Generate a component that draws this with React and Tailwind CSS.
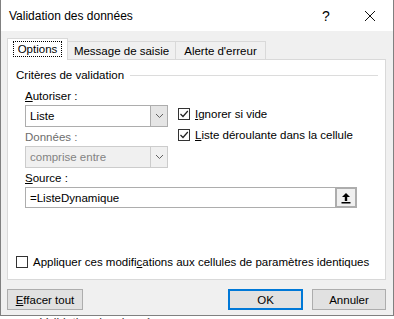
import React from 'react';

const Chevron = () => (
  <svg width="9" height="6" viewBox="0 0 9 6" className="block">
    <path d="M1 1 L4.5 4.5 L8 1" fill="none" stroke="#606060" strokeWidth="1" />
  </svg>
);

const Check = ({ checked }) => (
  <span className="w-[12px] h-[12px] border border-[#333] bg-white flex items-center justify-center shrink-0">
    {checked && (
      <svg width="10" height="10" viewBox="0 0 10 10" className="block">
        <path d="M1.5 5 L4 7.5 L8.8 2" fill="none" stroke="#222" strokeWidth="1.2" />
      </svg>
    )}
  </span>
);

const Select = ({ value, disabled }) => (
  <div
    className={`h-[22px] w-[143px] flex border ${
      disabled ? 'border-[#cccccc] bg-[#f0f0f0] text-[#838383]' : 'border-[#adadad] bg-white text-black'
    }`}
  >
    <div className="flex-1 flex items-center pl-[4px]">{value}</div>
    <div
      className={`w-[17px] flex items-center justify-center border-l ${
        disabled ? 'border-[#cccccc] bg-[#f0f0f0]' : 'border-[#adadad] bg-[#e5e5e5]'
      }`}
    >
      <Chevron />
    </div>
  </div>
);

const Btn = ({ children, primary, w }) => (
  <button
    className={`h-[21px] ${w} bg-[#e1e1e1] flex items-center justify-center ${
      primary ? 'border-2 border-[#0078d7]' : 'border border-[#adadad]'
    }`}
  >
    {children}
  </button>
);

export default function App() {
  return (
    <div
      className="w-[394px] h-[319px] bg-white overflow-hidden text-[11.5px] leading-[14px] text-black"
      style={{ fontFamily: '"Liberation Sans", Arial, sans-serif' }}
    >
      <div className="h-[316px] bg-[#f0f0f0] border-x border-b border-[#808080] flex flex-col">
        {/* title bar */}
        <div className="h-[31px] bg-white flex items-center pl-[8px] shrink-0">
          <span className="text-[12px] flex-1">Validation des données</span>
          <span className="text-[14px] w-[20px] mr-[28px] text-center">?</span>
          <svg width="12" height="12" viewBox="0 0 12 12" className="mr-[17px]">
            <path d="M1 1 L11 11 M11 1 L1 11" stroke="#111" strokeWidth="1" />
          </svg>
        </div>

        <div className="pl-[6px] pr-[7px] pt-[7px] flex flex-col">
          {/* tabs */}
          <div className="flex items-end h-[22px] relative z-10">
            <div className="h-[22px] w-[61px] bg-white border-l border-t border-r border-[#d9d9d9] flex items-center justify-center pb-[1px]">
              <span className="border border-dotted border-black px-[4px] py-[1px] leading-[12px]">Options</span>
            </div>
            <div className="h-[19px] w-[108px] border-t border-r border-[#d9d9d9] flex items-center justify-center">
              Message de saisie
            </div>
            <div className="h-[19px] w-[90px] border-t border-r border-[#d9d9d9] flex items-center justify-center">
              Alerte d'erreur
            </div>
          </div>

          {/* panel */}
          <div className="h-[221px] -mt-px bg-white border border-[#d9d9d9] flex flex-col">
            <div className="mt-[8px] pl-[8px] flex items-center">
              <span>Critères de validation</span>
              <div className="flex-1 h-px bg-[#dcdcdc] ml-[6px] mr-[7px]" />
            </div>

            <div className="pl-[17px]">
              <div className="flex">
                <div className="w-[143px] flex flex-col">
                  <div className="mt-[7px]">
                    <span className="underline">A</span>utoriser :
                  </div>
                  <div className="mt-[2px]">
                    <Select value="Liste" />
                  </div>
                  <div className="mt-[3px] text-[#6d6d6d]">Données :</div>
                  <div className="mt-[2px]">
                    <Select value="comprise entre" disabled />
                  </div>
                </div>
                <div className="ml-[10px] pt-[25px] flex flex-col gap-[7px]">
                  <div className="flex items-center gap-[5px]">
                    <Check checked />
                    <span>
                      <span className="underline">I</span>gnorer si vide
                    </span>
                  </div>
                  <div className="flex items-center gap-[5px]">
                    <Check checked />
                    <span>
                      <span className="underline">L</span>iste déroulante dans la cellule
                    </span>
                  </div>
                </div>
              </div>
              <div className="mt-[3px]">
                <span className="underline">S</span>ource :
              </div>
              <div className="mt-[2px] w-[332px] h-[21px] flex border border-[#adadad] bg-white">
                <div className="flex-1 flex items-center pl-[4px]">=ListeDynamique</div>
                <div className="w-[22px] border-2 border-[#adadad] -my-px -mr-px bg-[#f0f0f0] flex items-center justify-center">
                  <svg width="10" height="12" viewBox="0 0 10 12" className="block">
                    <path d="M5 1 L1 5 L3.8 5 L3.8 9 L6.2 9 L6.2 5 L9 5 Z" fill="#000" />
                    <rect x="0.5" y="10" width="9" height="1.5" fill="#000" />
                  </svg>
                </div>
              </div>
            </div>

            <div className="mt-auto mb-[10px] pl-[8px] flex items-center gap-[5px]">
              <Check />
              <span>
                Appliquer ces modifi<span className="underline">c</span>ations aux cellules de paramètres identiques
              </span>
            </div>
          </div>

          {/* buttons */}
          <div className="mt-[9px] flex items-center">
            <Btn w="w-[76px]">
              <span>
                <span className="underline">E</span>ffacer tout
              </span>
            </Btn>
            <div className="flex-1" />
            <Btn w="w-[75px]" primary>
              OK
            </Btn>
            <div className="w-[9px]" />
            <Btn w="w-[74px]">Annuler</Btn>
          </div>
        </div>
      </div>
      <div className="h-[3px] overflow-hidden pl-[40px] text-[12px] leading-[14px] text-[#333]">
        Validation des données
      </div>
    </div>
  );
}
